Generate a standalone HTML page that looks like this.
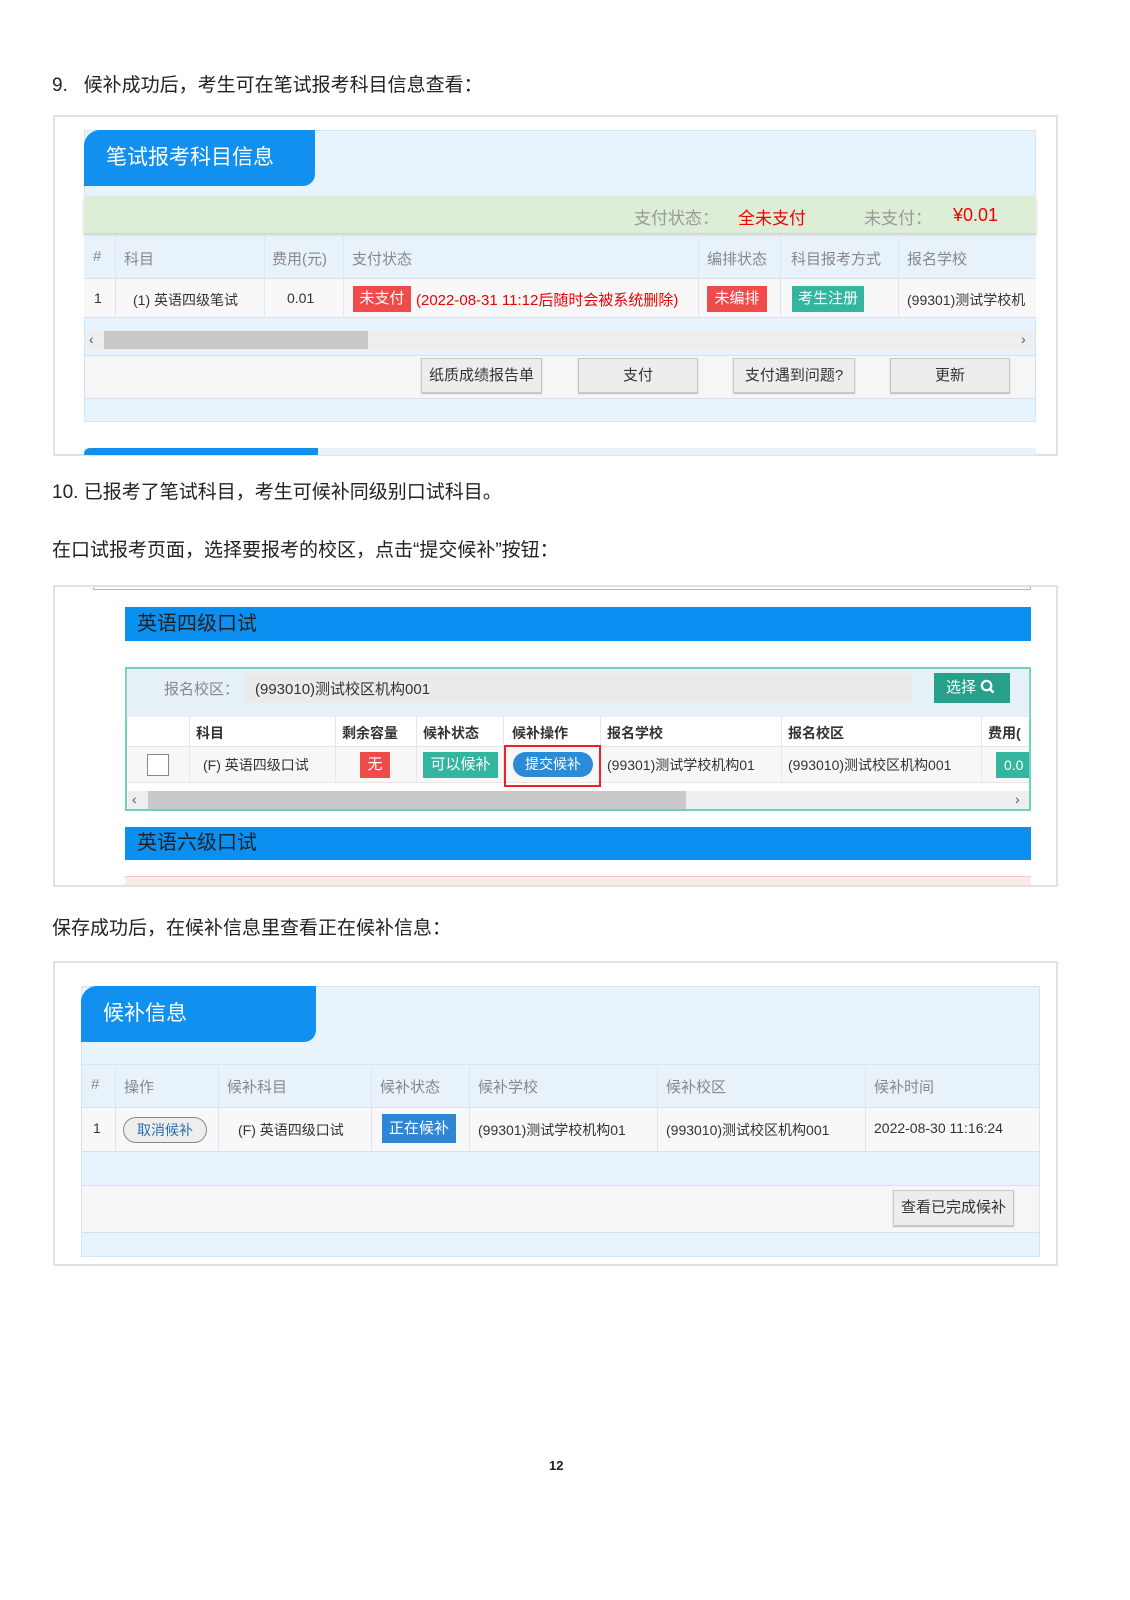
<!DOCTYPE html>
<html><head><meta charset="utf-8">
<style>
*{margin:0;padding:0;box-sizing:border-box}
body{width:1130px;height:1600px;background:#fff;position:relative;overflow:hidden;font-family:"Liberation Sans","Noto Sans CJK SC",sans-serif;color:#222}
.a{position:absolute}
.t{font-size:19px;color:#222;white-space:nowrap}
.box{border:2px solid #e2e2e2;background:#fff}
.pnl{background:#e8f4fd;border:1px solid #cfe6f6}
.tab{background:#1290ef;color:#fff;font-size:21px;border-radius:16px 0 12px 0;padding-left:22px;line-height:56px}
.c{position:absolute;font-size:14px;white-space:nowrap;color:#333}
.h{color:#888;font-size:15px}
.vl{position:absolute;width:1px;background:#dde6ee}
.btn{position:absolute;background:#ededed;border:1px solid #c8c8c8;font-size:15px;text-align:center;color:#333;box-shadow:0 1px 1px #bbb}
.tag{position:absolute;color:#fff;font-size:15px;text-align:center}
</style></head><body>

<div class="a t" style="left:52px;top:70px">9.&nbsp;&nbsp;&nbsp;候补成功后，考生可在笔试报考科目信息查看：</div>

<div class="a box" style="left:53px;top:115px;width:1005px;height:341px"></div>
<div class="a pnl" style="left:84px;top:130px;width:952px;height:292px"></div>
<div class="a tab" style="left:84px;top:130px;width:231px;height:56px">笔试报考科目信息</div>
<div class="a" style="left:84px;top:196px;width:952px;height:37px;background:#dcefd6;box-shadow:0 2px 3px #ccc"></div>
<div class="c" style="left:634px;top:204px;font-size:17px;color:#999">支付状态：</div>
<div class="c" style="left:738px;top:204px;font-size:17px;color:#e00">全未支付</div>
<div class="c" style="left:864px;top:204px;font-size:17px;color:#999">未支付：</div>
<div class="c" style="left:953px;top:205px;font-size:18px;color:#e00">¥0.01</div>
<div class="a" style="left:84px;top:236px;width:952px;height:42px;background:#e7f2fb"></div>
<div class="a" style="left:84px;top:278px;width:952px;height:40px;background:#f8f8f8;border-top:1px solid #dde;border-bottom:1px solid #dde"></div>
<div class="vl" style="left:115px;top:236px;height:82px"></div>
<div class="vl" style="left:264px;top:236px;height:82px"></div>
<div class="vl" style="left:343px;top:236px;height:82px"></div>
<div class="vl" style="left:698px;top:236px;height:82px"></div>
<div class="vl" style="left:780px;top:236px;height:82px"></div>
<div class="vl" style="left:898px;top:236px;height:82px"></div>
<div class="c h" style="left:93px;top:248px">#</div>
<div class="c h" style="left:124px;top:248px">科目</div>
<div class="c h" style="left:272px;top:248px">费用(元)</div>
<div class="c h" style="left:352px;top:248px">支付状态</div>
<div class="c h" style="left:707px;top:248px">编排状态</div>
<div class="c h" style="left:791px;top:248px">科目报考方式</div>
<div class="c h" style="left:907px;top:248px">报名学校</div>
<div class="c" style="left:94px;top:290px">1</div>
<div class="c" style="left:133px;top:290px">(1) 英语四级笔试</div>
<div class="c" style="left:287px;top:290px">0.01</div>
<div class="tag" style="left:353px;top:286px;width:58px;height:26px;line-height:26px;background:#ef4b4b">未支付</div>
<div class="c" style="left:416px;top:289px;color:#e00;font-size:15px">(2022-08-31 11:12后随时会被系统删除)</div>
<div class="tag" style="left:707px;top:286px;width:60px;height:26px;line-height:26px;background:#ef4b4b">未编排</div>
<div class="tag" style="left:792px;top:286px;width:72px;height:26px;line-height:26px;background:#34b5a0">考生注册</div>
<div class="c" style="left:907px;top:290px">(99301)测试学校机</div>
<div class="a" style="left:85px;top:330px;width:950px;height:20px;background:#eee"></div>
<div class="a" style="left:104px;top:331px;width:264px;height:18px;background:#c9c9c9"></div>
<div class="c" style="left:89px;top:331px;color:#555">‹</div>
<div class="c" style="left:1021px;top:331px;color:#555">›</div>
<div class="a" style="left:85px;top:355px;width:950px;height:44px;background:#f6f6f6;border-top:1px solid #dde;border-bottom:1px solid #dde"></div>
<div class="btn" style="left:421px;top:358px;width:121px;height:35px;line-height:33px">纸质成绩报告单</div>
<div class="btn" style="left:578px;top:358px;width:120px;height:35px;line-height:33px">支付</div>
<div class="btn" style="left:733px;top:358px;width:122px;height:35px;line-height:33px">支付遇到问题?</div>
<div class="btn" style="left:890px;top:358px;width:120px;height:35px;line-height:33px">更新</div>
<div class="a" style="left:84px;top:448px;width:952px;height:7px;background:#e8f4fd"></div>
<div class="a" style="left:84px;top:448px;width:234px;height:7px;background:#1290ef;border-radius:6px 0 0 0"></div>

<div class="a t" style="left:52px;top:477px">10. 已报考了笔试科目，考生可候补同级别口试科目。</div>
<div class="a t" style="left:52px;top:535px">在口试报考页面，选择要报考的校区，点击“提交候补”按钮：</div>

<div class="a box" style="left:53px;top:585px;width:1005px;height:302px"></div>
<div class="a" style="left:93px;top:587px;width:938px;height:3px;border:1px solid #7fd3c5;border-top:none"></div>
<div class="a" style="left:125px;top:607px;width:906px;height:34px;background:#0b8ff0;color:#222;font-size:20px;line-height:34px;padding-left:12px">英语四级口试</div>
<div class="a" style="left:125px;top:667px;width:906px;height:144px;border:2px solid #6fd0c0;background:#fff"></div>
<div class="a" style="left:127px;top:669px;width:902px;height:48px;background:#e6f1f7;box-shadow:0 2px 3px #ccc"></div>
<div class="c" style="left:164px;top:678px;color:#888;font-size:15px">报名校区：</div>
<div class="a" style="left:243px;top:673px;width:669px;height:30px;background:#ebebeb"></div>
<div class="c" style="left:255px;top:678px;font-size:15px">(993010)测试校区机构001</div>
<div class="a" style="left:934px;top:673px;width:76px;height:30px;background:#26a08a;color:#fff;font-size:15px;line-height:30px;padding-left:12px">选择 <svg width="15" height="15" viewBox="0 0 16 16" style="vertical-align:-2px"><circle cx="7" cy="7" r="5" fill="none" stroke="#fff" stroke-width="2.4"/><path d="M10.5 10.5L14.5 14.5" stroke="#fff" stroke-width="2.6"/></svg></div>
<div class="a" style="left:128px;top:717px;width:901px;height:30px;background:#fff;border-bottom:1px solid #e5e5e5"></div>
<div class="a" style="left:128px;top:747px;width:901px;height:36px;background:#f7f7f7;border-bottom:1px solid #e5e5e5"></div>
<div class="vl" style="left:189px;top:717px;height:66px;background:#e8e8e8"></div>
<div class="vl" style="left:335px;top:717px;height:66px;background:#e8e8e8"></div>
<div class="vl" style="left:416px;top:717px;height:66px;background:#e8e8e8"></div>
<div class="vl" style="left:503px;top:717px;height:66px;background:#e8e8e8"></div>
<div class="vl" style="left:600px;top:717px;height:66px;background:#e8e8e8"></div>
<div class="vl" style="left:781px;top:717px;height:66px;background:#e8e8e8"></div>
<div class="vl" style="left:981px;top:717px;height:66px;background:#e8e8e8"></div>
<div class="c" style="left:196px;top:723px;font-weight:bold">科目</div>
<div class="c" style="left:342px;top:723px;font-weight:bold">剩余容量</div>
<div class="c" style="left:423px;top:723px;font-weight:bold">候补状态</div>
<div class="c" style="left:512px;top:723px;font-weight:bold">候补操作</div>
<div class="c" style="left:607px;top:723px;font-weight:bold">报名学校</div>
<div class="c" style="left:788px;top:723px;font-weight:bold">报名校区</div>
<div class="c" style="left:988px;top:723px;font-weight:bold">费用(</div>
<div class="a" style="left:147px;top:754px;width:22px;height:22px;border:1px solid #888;background:#fff"></div>
<div class="c" style="left:203px;top:755px">(F) 英语四级口试</div>
<div class="tag" style="left:360px;top:752px;width:30px;height:26px;line-height:26px;background:#ef4b4b">无</div>
<div class="tag" style="left:423px;top:752px;width:75px;height:26px;line-height:26px;background:#34b5a0">可以候补</div>
<div class="a" style="left:504px;top:745px;width:97px;height:42px;border:2px solid #e22"></div>
<div class="tag" style="left:513px;top:752px;width:80px;height:25px;line-height:25px;background:#2a8bd9;border-radius:13px;font-size:14px">提交候补</div>
<div class="c" style="left:607px;top:755px">(99301)测试学校机构01</div>
<div class="c" style="left:788px;top:755px">(993010)测试校区机构001</div>
<div class="tag" style="left:996px;top:752px;width:33px;height:26px;line-height:26px;background:#34b5a0;font-size:14px;text-align:left;padding-left:8px;overflow:hidden">0.0</div>
<div class="a" style="left:128px;top:791px;width:901px;height:18px;background:#eee"></div>
<div class="a" style="left:148px;top:791px;width:538px;height:18px;background:#c9c9c9"></div>
<div class="c" style="left:132px;top:791px;color:#555">‹</div>
<div class="c" style="left:1015px;top:791px;color:#555">›</div>
<div class="a" style="left:125px;top:827px;width:906px;height:33px;background:#0b8ff0;color:#222;font-size:20px;line-height:33px;padding-left:12px">英语六级口试</div>
<div class="a" style="left:125px;top:876px;width:906px;height:9px;background:#fbeaea;border-top:1px solid #f2caca"></div>

<div class="a t" style="left:52px;top:913px">保存成功后，在候补信息里查看正在候补信息：</div>

<div class="a box" style="left:53px;top:961px;width:1005px;height:305px"></div>
<div class="a pnl" style="left:81px;top:986px;width:959px;height:271px"></div>
<div class="a tab" style="left:81px;top:986px;width:235px;height:56px">候补信息</div>
<div class="a" style="left:82px;top:1064px;width:957px;height:43px;background:#e7f2fb;border-top:1px solid #d8e6f0"></div>
<div class="a" style="left:82px;top:1107px;width:957px;height:45px;background:#f8f8f8;border-top:1px solid #dde;border-bottom:1px solid #dde"></div>
<div class="vl" style="left:115px;top:1064px;height:88px"></div>
<div class="vl" style="left:218px;top:1064px;height:88px"></div>
<div class="vl" style="left:371px;top:1064px;height:88px"></div>
<div class="vl" style="left:469px;top:1064px;height:88px"></div>
<div class="vl" style="left:657px;top:1064px;height:88px"></div>
<div class="vl" style="left:865px;top:1064px;height:88px"></div>
<div class="c h" style="left:91px;top:1076px">#</div>
<div class="c h" style="left:124px;top:1076px">操作</div>
<div class="c h" style="left:227px;top:1076px">候补科目</div>
<div class="c h" style="left:380px;top:1076px">候补状态</div>
<div class="c h" style="left:478px;top:1076px">候补学校</div>
<div class="c h" style="left:666px;top:1076px">候补校区</div>
<div class="c h" style="left:874px;top:1076px">候补时间</div>
<div class="c" style="left:93px;top:1120px">1</div>
<div class="a" style="left:123px;top:1117px;width:84px;height:26px;border:1px solid #888;border-radius:13px;background:#eee;color:#2a6fb0;font-size:14px;text-align:center;line-height:24px">取消候补</div>
<div class="c" style="left:238px;top:1120px">(F) 英语四级口试</div>
<div class="tag" style="left:382px;top:1114px;width:74px;height:29px;line-height:29px;background:#2e86d6">正在候补</div>
<div class="c" style="left:478px;top:1120px">(99301)测试学校机构01</div>
<div class="c" style="left:666px;top:1120px">(993010)测试校区机构001</div>
<div class="c" style="left:874px;top:1120px">2022-08-30 11:16:24</div>
<div class="a" style="left:82px;top:1185px;width:957px;height:48px;background:#f6f6f6;border-top:1px solid #dde;border-bottom:1px solid #dde"></div>
<div class="btn" style="left:893px;top:1190px;width:121px;height:36px;line-height:34px">查看已完成候补</div>

<div class="a" style="left:549px;top:1458px;font-size:13px;font-weight:bold">12</div>
</body></html>
